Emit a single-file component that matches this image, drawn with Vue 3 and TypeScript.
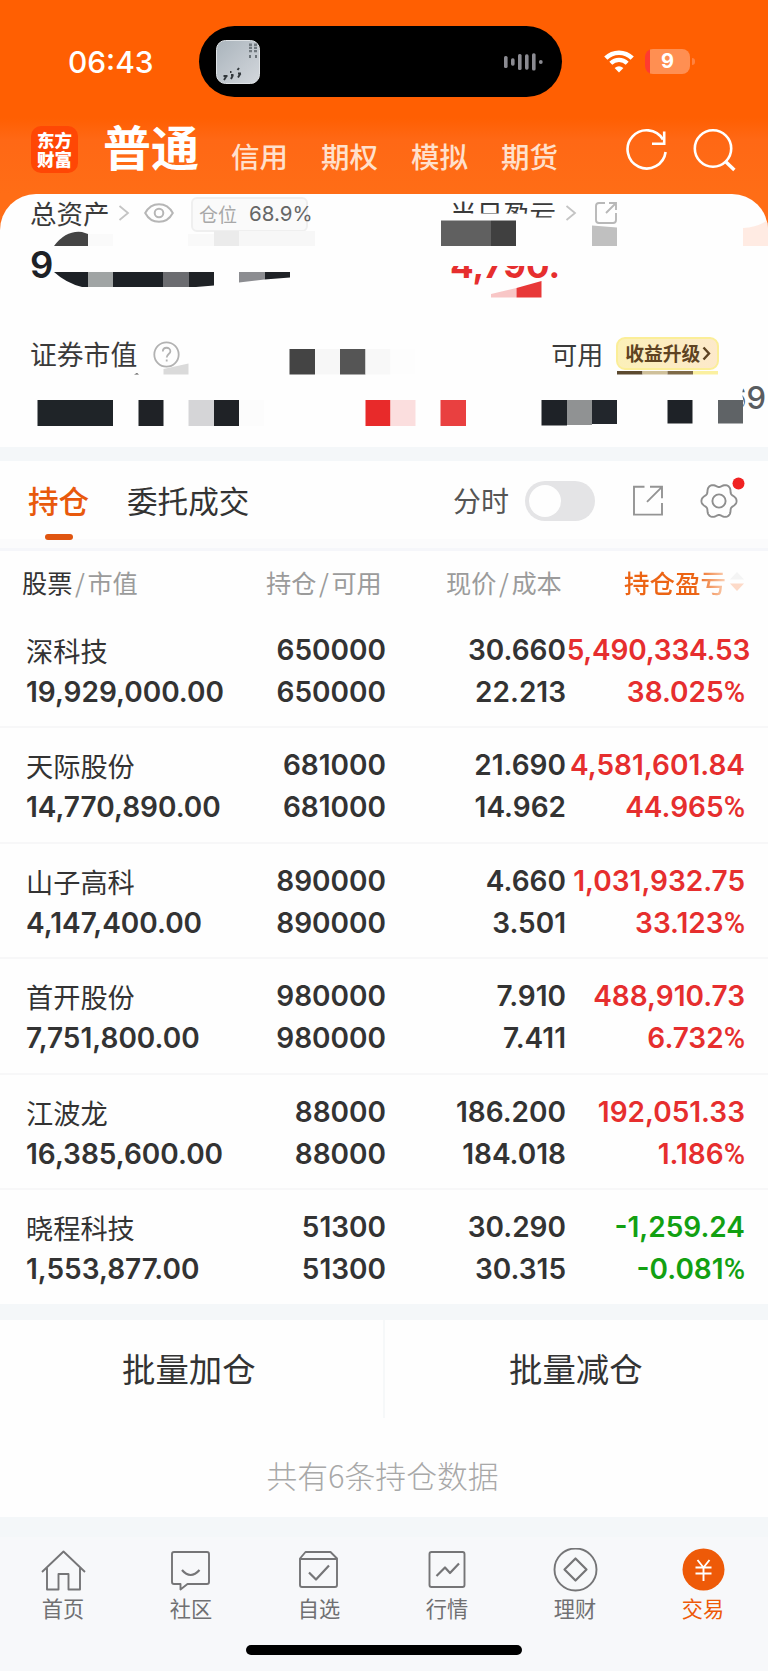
<script setup lang="ts">
interface Holding {
  name: string
  value: string
  amount: string
  price: string
  cost: string
  profit: string
  rate: string
  down?: boolean
}

interface Block {
  x: number
  y: number
  w: number
  h: number
  c: string
}

const markets: string[] = ['信用', '期权', '模拟', '期货']

const holdings: Holding[] = [
  { name: '深科技', value: '19,929,000.00', amount: '650000', price: '30.660', cost: '22.213', profit: '5,490,334.53', rate: '38.025' },
  { name: '天际股份', value: '14,770,890.00', amount: '681000', price: '21.690', cost: '14.962', profit: '4,581,601.84', rate: '44.965' },
  { name: '山子高科', value: '4,147,400.00', amount: '890000', price: '4.660', cost: '3.501', profit: '1,031,932.75', rate: '33.123' },
  { name: '首开股份', value: '7,751,800.00', amount: '980000', price: '7.910', cost: '7.411', profit: '488,910.73', rate: '6.732' },
  { name: '江波龙', value: '16,385,600.00', amount: '88000', price: '186.200', cost: '184.018', profit: '192,051.33', rate: '1.186' },
  { name: '晓程科技', value: '1,553,877.00', amount: '51300', price: '30.290', cost: '30.315', profit: '-1,259.24', rate: '-0.081', down: true },
]

const navItems: string[] = ['首页', '社区', '自选', '行情', '理财', '交易']

// Privacy mosaic over the account summary; the origin is the card's top-left corner.
const mosaic: Block[] = [
  { x: 88, y: 40, w: 25, h: 12, c: '#fafafa' },
  { x: 188, y: 40, w: 26, h: 12, c: '#f9f9f9' },
  { x: 214, y: 37, w: 25, h: 15, c: '#ebebeb' },
  { x: 239, y: 37, w: 76, h: 15, c: '#f7f7f7' },
  { x: 441, y: 26.5, w: 50, h: 25.5, c: '#606060' },
  { x: 491, y: 26.5, w: 25, h: 25.5, c: '#404040' },
  { x: 88, y: 78, w: 25, h: 15, c: '#a0a4a4' },
  { x: 113, y: 78, w: 50, h: 15, c: '#1d2126' },
  { x: 163, y: 78, w: 26, h: 15, c: '#6b6c70' },
  { x: 289.5, y: 155, w: 25.5, h: 25.5, c: '#444' },
  { x: 315, y: 155, w: 25, h: 25.5, c: '#f7f7f7' },
  { x: 340, y: 155, w: 25.5, h: 25.5, c: '#555' },
  { x: 365.5, y: 155, w: 25, h: 25.5, c: '#f8f8f8' },
  { x: 390.5, y: 155, w: 25, h: 25.5, c: '#fdfdfd' },
  { x: 617, y: 177, w: 25.5, h: 3.5, c: '#5c4a30' },
  { x: 642.5, y: 177, w: 25, h: 3.5, c: '#cfc09a' },
  { x: 667.5, y: 177, w: 25.5, h: 3.5, c: '#7f6a48' },
  { x: 693, y: 177, w: 25, h: 3.5, c: '#fbf0a0' },
  { x: 37.5, y: 206, w: 75.5, h: 26, c: '#1f2428' },
  { x: 138.5, y: 206, w: 25, h: 26, c: '#1f2226' },
  { x: 188.5, y: 206, w: 25.5, h: 26, c: '#d5d5d7' },
  { x: 214, y: 206, w: 25, h: 26, c: '#1f2226' },
  { x: 239, y: 206, w: 25, h: 26, c: '#fcfcfc' },
  { x: 365.5, y: 206, w: 25, h: 26, c: '#e82a2a' },
  { x: 390.5, y: 206, w: 25, h: 26, c: '#fbdede' },
  { x: 440.5, y: 206, w: 25.5, h: 26, c: '#e94040' },
  { x: 541.5, y: 206, w: 25.5, h: 25.5, c: '#1e2227' },
  { x: 567, y: 206, w: 25, h: 25, c: '#909293' },
  { x: 592, y: 206, w: 25, h: 24, c: '#22262c' },
  { x: 667.5, y: 206, w: 25, h: 23.5, c: '#1e2227' },
  { x: 718, y: 206, w: 25, h: 23.5, c: '#5f6366' },
]

function gearPath(): string {
  const pts: string[] = []
  for (let i = 0; i < 120; i++) {
    const t = (i / 120) * Math.PI * 2
    const r = 15.9 + 1.8 * Math.cos(6 * t) - 0.15 * Math.cos(12 * t)
    pts.push(`${(20 + r * Math.cos(t)).toFixed(2)} ${(20 + r * Math.sin(t)).toFixed(2)}`)
  }
  return `M${pts.join('L')}Z`
}
const gear = gearPath()
</script>

<template>
  <div class="phone">
    <header class="top">
      <div class="status">
        <span class="clock">06:43</span>
        <div class="island">
          <svg class="thumb" width="44" height="44" viewBox="0 0 44 44">
            <defs>
              <linearGradient id="th" x1="0" y1="0" x2="1" y2="1">
                <stop offset="0" stop-color="#aab4bc" />
                <stop offset="1" stop-color="#d3d7dc" />
              </linearGradient>
            </defs>
            <rect x=".5" y=".5" width="43" height="43" rx="9" fill="url(#th)" stroke="#dfe3e6" />
            <path d="M34.500 3.500v9M39.500 3.500v9" fill="none" stroke="#70787e" stroke-width="3" stroke-dasharray="2.400 .8" />
            <path d="M34 15v3M40 15v3" stroke="#4e555b" stroke-width="1.500" />
            <path d="M8 40l2.500-4M15 39l2-4M22 37.500l2.500-4M7.500 36h4M15 35h2.500M22 33.500h3M14 32h1.500M21.500 30l1.500-2" stroke="#32383c" stroke-width="1.900" />
          </svg>
          <svg class="wave" width="40" height="20" viewBox="0 0 40 20" fill="#8b8b92">
            <rect x="0" y="4" width="3.6" height="12" rx="1.6" />
            <rect x="7" y="6.3" width="3.6" height="7.4" rx="1.6" />
            <rect x="14" y="2" width="3.6" height="16" rx="1.6" />
            <rect x="21" y="2.3" width="3.6" height="15.4" rx="1.6" />
            <rect x="28" y="1.2" width="3.6" height="17.4" rx="1.6" />
            <circle cx="36.8" cy="10" r="1.9" />
          </svg>
        </div>
        <svg class="wifi" width="30" height="23" viewBox="0 0 30 23">
          <path d="M1.8 8.2a18.8 18.8 0 0 1 26.4 0" fill="none" stroke="#fff" stroke-width="4.6" />
          <path d="M6.8 13.2a11.7 11.7 0 0 1 16.4 0" fill="none" stroke="#fff" stroke-width="4.2" />
          <path d="M10.6 18q4.4-3.6 8.8 0L15 22.6z" fill="#fff" />
        </svg>
        <div class="battery"><span>9</span></div>
        <i class="tip"></i>
      </div>
      <div class="menu">
        <div class="logo"><span>东方</span><span>财富</span></div>
        <h1>普通</h1>
        <nav>
          <span v-for="m in markets" :key="m">{{ m }}</span>
        </nav>
        <svg class="tools" width="112" height="46" viewBox="0 0 112 46" fill="none" stroke="#fff" stroke-width="2.6">
          <path d="M38 11.5A19.1 19.1 0 1 0 40.6 24" />
          <path d="M39.2 3.5v12.2H27" />
          <circle cx="88" cy="20.5" r="18.2" />
          <path d="M101 34l8.400 8" stroke-width="3.4" />
        </svg>
      </div>
    </header>

    <section class="summary">
      <div class="row labels">
        <span class="label total">总资产</span>
        <svg class="chev" width="12" height="18" viewBox="0 0 12 18"><path d="M1.5 2l8.5 7-8.5 7" fill="none" stroke="#c4c4c4" stroke-width="1.8" /></svg>
        <svg class="eye" width="30" height="20" viewBox="0 0 30 20" fill="none" stroke="#b6b6b6" stroke-width="2">
          <path d="M1.2 10C7.5-1.8 22.5-1.8 28.8 10 22.5 21.8 7.5 21.8 1.2 10z" />
          <circle cx="15" cy="10" r="4.3" />
        </svg>
        <div class="pill"><span>仓位</span><b>68.9%</b></div>
        <span class="label today">当日盈亏</span>
        <svg class="chev" width="12" height="18" viewBox="0 0 12 18"><path d="M1.5 2l8.5 7-8.5 7" fill="none" stroke="#c4c4c4" stroke-width="1.8" /></svg>
        <svg class="share" width="24" height="24" viewBox="0 0 24 24" fill="none" stroke="#b8b8b8" stroke-width="1.9">
          <path d="M11 2H5Q2 2 2 5v14q0 3 3 3h14q3 0 3-3v-7M15 2h7v7M22 2L12 12" />
        </svg>
      </div>
      <div class="row totals">
        <span class="big">9</span>
        <span class="gain">4,790.</span>
      </div>
      <div class="row funds">
        <span class="label">证券市值</span>
        <svg class="help" width="27" height="27" viewBox="0 0 27 27" fill="none" stroke="#b2b2b2" stroke-width="1.8">
          <circle cx="13.5" cy="13.5" r="12.2" />
          <path d="M9.8 10.6c0-5.2 7.6-4.9 7.6-.4 0 2.7-3.7 3-3.7 6.4M13.7 18.4v2.2" />
        </svg>
        <span class="label usable">可用</span>
        <div class="upgrade">
          <span>收益升级</span>
          <svg width="9" height="15" viewBox="0 0 9 15"><path d="M1.5 1.5L7 7.5l-5.5 6" fill="none" stroke="#5e4322" stroke-width="2.4" /></svg>
        </div>
      </div>
      <div class="row tail"><span>69</span></div>
      <svg class="mosaic" width="768" height="253" viewBox="0 0 768 253">
        <path d="M445 19.500h80l8 4h28v14.500H445zM445 52h130v20H445z" fill="#fefefe" />
        <path d="M720 184h22l2 6-2 10 2 9-2 6h-22z" fill="#fefefe" />
        <rect v-for="(b, i) in mosaic" :key="i" :x="b.x" :y="b.y" :width="b.w" :height="b.h" :fill="b.c" />
        <path d="M54 52Q66 36 82 38l6 2v12z" fill="#444" />
        <path d="M54 78h34v15h-6Q66 89 54 78z" fill="#1d2126" />
        <path d="M189 78h25v13.5l-18 1.5h-7zM264.5 78H290v5.5l-25.500 2z" fill="#1f2226" />
        <path d="M239 78h25.500v7.500L239 88.500z" fill="#8c8d91" />
        <path d="M592 31.500l25 2V52h-25z" fill="#c0c0c0" />
        <path d="M743 34q15-1 25-8v26h-25z" fill="#ffebe3" />
        <path d="M491 100l25.500-6v9.500H491z" fill="#f8c6c6" />
        <path d="M516.500 94l25-7v16.500h-25z" fill="#e83838" />
        <path d="M163.500 175l25-5.500v11h-25z" fill="#dadada" />
        <path d="M134 180.500l3-1.500 2 1.500z" fill="#555" />
      </svg>
    </section>

    <section class="tabs">
      <div class="tab on">持仓</div>
      <div class="tab">委托成交</div>
      <span class="minute">分时</span>
      <div class="switch"><i></i></div>
      <svg class="out" width="32" height="32" viewBox="0 0 32 32" fill="none" stroke="#949494" stroke-width="1.9">
        <path d="M12.500 1.800H2v27.800h28V18M18 1.800h12v11.500M30 1.800L15 16.800" />
      </svg>
      <svg class="gear" width="46" height="46" viewBox="0 0 46 46">
        <g transform="translate(0 5)" fill="none" stroke="#8e8e8e" stroke-width="1.900">
          <path :d="gear" />
          <circle cx="20" cy="20" r="6.600" />
        </g>
        <circle cx="39.500" cy="7.500" r="6" fill="#f02222" />
      </svg>
    </section>
    <div class="rule"></div>

    <section class="table">
      <div class="thead">
        <span class="c1"><em>股票</em><i>/</i>市值</span>
        <span class="c2">持仓<i>/</i>可用</span>
        <span class="c3">现价<i>/</i>成本</span>
        <span class="c4"><b>持仓盈亏</b>
          <svg width="14" height="22" viewBox="0 0 14 22"><path d="M0 8.500L7 1l7 7.500z" fill="#f4f4f4" /><path d="M0 12.500L7 20l7-7.500z" fill="#fddac8" /></svg>
        </span>
      </div>
      <div v-for="h in holdings" :key="h.name" class="item">
        <div class="c1"><span class="name">{{ h.name }}</span><span>{{ h.value }}</span></div>
        <div class="c2"><span>{{ h.amount }}</span><span>{{ h.amount }}</span></div>
        <div class="c3"><span>{{ h.price }}</span><span>{{ h.cost }}</span></div>
        <div class="c4" :class="{ down: h.down }">
          <span class="profit">{{ h.profit }}</span>
          <span>{{ h.rate }}<small>%</small></span>
        </div>
      </div>
    </section>

    <section class="batch">
      <div>批量加仓</div>
      <div>批量减仓</div>
    </section>
    <p class="count">共有6条持仓数据</p>

    <footer>
      <div class="nav">
        <div v-for="(n, i) in navItems" :key="n" class="nav-item" :class="{ active: i === 5 }">
          <svg width="46" height="46" viewBox="0 0 46 46" fill="none" stroke="#757577" stroke-width="1.900" stroke-linejoin="round">
            <path v-if="i === 0" d="M2 24L23.500 3.500 45 24M7 20v21.500h11.500V26h10v15.500H40V20" />
            <template v-else-if="i === 1">
              <path d="M6 4h33q2 0 2 2v28q0 2-2 2H19.500l-7 5.500V36H6q-2 0-2-2V6q0-2 2-2z" />
              <path d="M14 22q8.500 10 17.500 0" stroke-width="2.200" />
            </template>
            <template v-else-if="i === 2">
              <path d="M9.500 4h25L41 10.500V37q0 2-2 2H6q-2 0-2-2V10.500zM4.500 11h36" />
              <path d="M13 24.500l7 7L33 17.500" stroke-width="2.200" />
            </template>
            <template v-else-if="i === 3">
              <rect x="5.500" y="4" width="35" height="35" rx="2" />
              <path d="M12.500 28l8.500-8.500 5 5.500L35 15.500" stroke-width="2.200" />
            </template>
            <template v-else-if="i === 4">
              <circle cx="23.500" cy="21.500" r="21" />
              <path d="M23.500 10.500l11 11-11 11-11-11z" stroke-width="2.200" />
            </template>
            <template v-else>
              <circle cx="23.500" cy="21.500" r="21" fill="#ee5a08" stroke="none" />
              <path d="M17.500 12l6 7.500L29.500 12M15.500 19.500h16M15.500 25.500h16M23.500 19.500V33" stroke="#fff" stroke-width="1.900" />
            </template>
          </svg>
          <span>{{ n }}</span>
        </div>
      </div>
      <div class="home-bar"></div>
    </footer>
  </div>
</template>

<style>
body {
  margin: 0;
  background: #fefefe;
}
</style>

<style scoped>
.phone {
  width: 768px;
  height: 1671px;
  overflow: hidden;
  display: flex;
  flex-direction: column;
  background: #fefefe;
  color: #333;
  font-family: "Noto Sans CJK SC", sans-serif;
}
svg {
  display: block;
  flex: none;
}
i, em {
  font-style: normal;
}
.top {
  height: 230px;
  flex: none;
  margin-bottom: -36px;
  background: linear-gradient(#ff5f02 0, #ff5f02 118px, #ff6815 140px, #ff6d16 194px);
}
.status {
  height: 123px;
  display: flex;
  align-items: center;
}
.clock {
  width: 131px;
  margin: 1px 0 0 68px;
  font: 500 29.900px/30px Inter, sans-serif;
  color: #fff;
}
.island {
  width: 363px;
  height: 71px;
  box-sizing: border-box;
  padding: 0 18px 0 17px;
  border-radius: 36px;
  background: #000;
  display: flex;
  align-items: center;
  justify-content: space-between;
}
.wifi {
  margin-left: 42px;
}
.battery {
  margin-left: 11px;
  width: 45px;
  height: 25px;
  border-radius: 8px;
  background: linear-gradient(90deg, #ff3b30 0 5px, #ff8f52 5px);
  text-align: center;
  color: #fff;
  font: 700 20px/25px Inter, sans-serif;
}
.tip {
  width: 3px;
  height: 7px;
  margin-left: 2px;
  border-radius: 0 3px 3px 0;
  background: #ff8240;
}
.menu {
  height: 70px;
  padding-top: 1px;
  display: flex;
  align-items: flex-start;
}
.logo {
  width: 47px;
  height: 47px;
  margin: 2px 0 0 31px;
  border-radius: 10px;
  background: #ff4705;
  color: #fff;
  display: flex;
  flex-direction: column;
  align-items: center;
  justify-content: center;
  font-size: 17.500px;
  font-weight: 900;
  line-height: 20px;
}
.logo span {
  margin-top: -1px;
}
h1 {
  margin: -7px 0 0 25px;
  width: 128px;
  font-size: 48px;
  line-height: 56px;
  font-weight: 700;
  color: #fff;
}
nav {
  display: flex;
  width: 383px;
  color: #ffe0cc;
  font-size: 28.500px;
  font-weight: 500;
  line-height: 32px;
  margin-top: 16px;
}
nav span {
  width: 90px;
  flex: none;
}
.tools {
  margin-left: 11px;
  margin-top: 4px;
}
.summary {
  position: relative;
  height: 253px;
  flex: none;
  background: #fefefe;
  border-radius: 36px 36px 0 0;
  overflow: hidden;
}
.row {
  display: flex;
  align-items: center;
}
.labels {
  height: 38px;
}
.label {
  font-size: 26.800px;
  line-height: 36px;
  margin-left: 30px;
  color: #3a3a3a;
  white-space: nowrap;
}
.labels .total {
  width: 79px;
  font-size: 26.500px;
}
.chev {
  margin-left: 9px;
}
.eye {
  margin-left: 14px;
}
.pill {
  margin: 2px 0 0 17px;
  width: 117px;
  height: 35px;
  box-sizing: border-box;
  border: 2px solid #efefef;
  border-radius: 6px;
  background: #fafafa;
  display: flex;
  align-items: center;
  white-space: nowrap;
}
.pill span {
  margin-left: 6px;
  width: 50px;
  flex: none;
  font-size: 19px;
  line-height: 28px;
  color: #a8a8a8;
}
.pill b {
  font: 400 20.500px/28px Inter, sans-serif;
  color: #666;
}
.labels .today {
  margin-left: 142px;
  width: 106px;
  font-size: 26.500px;
}
.share {
  margin-left: 17px;
}
.totals {
  height: 66px;
  font-family: Inter, sans-serif;
}
.big {
  margin-left: 30px;
  width: 420px;
  font-size: 36.500px;
  font-weight: 600;
  color: #1d2126;
}
.gain {
  font-size: 35px;
  font-weight: 700;
  color: #e62e2e;
}
.funds {
  height: 112px;
}
.help {
  margin-left: 16px;
}
.funds .usable {
  margin-left: 371px;
  width: 54px;
  font-size: 26px;
}
.upgrade {
  margin: 0 0 2px 11px;
  width: 103px;
  height: 33px;
  box-sizing: border-box;
  padding-left: 7px;
  border: 2px solid #fbee98;
  border-radius: 9px;
  background: linear-gradient(100deg, #fbf0b8, #fde9cb);
  display: flex;
  align-items: center;
  gap: 2px;
  color: #5e4322;
  font-size: 18.800px;
  font-weight: 700;
  line-height: 24px;
  white-space: nowrap;
}
.tail {
  height: 26px;
  margin-top: -25px;
  justify-content: flex-end;
  padding-right: 2px;
  font: 500 31px/26px Inter, sans-serif;
  color: #595c60;
}
.mosaic {
  position: absolute;
  left: 0;
  top: 0;
}
.tabs {
  height: 78px;
  flex: none;
  border-top: 14px solid #f4f7f9;
  display: flex;
  align-items: flex-start;
}
.tab {
  position: relative;
  margin: 21px 0 0 38px;
  width: 123px;
  font-size: 30.600px;
  line-height: 36px;
  white-space: nowrap;
}
.tab.on {
  margin-left: 28px;
  width: 61px;
  color: #e8590c;
  font-weight: 500;
}
.tab.on::after {
  content: "";
  position: absolute;
  z-index: 1;
  left: 17px;
  top: 52px;
  width: 28px;
  height: 6px;
  border-radius: 3px;
  background: #e05510;
}
.minute {
  margin: 21px 0 0 203px;
  width: 56px;
  font-size: 28px;
  line-height: 36px;
  color: #555;
}
.switch {
  margin: 20px 0 0 16px;
  width: 70px;
  height: 40px;
  border-radius: 20px;
  background: #e4e4e6;
}
.switch i {
  display: block;
  width: 32px;
  height: 32px;
  margin: 4px;
  border-radius: 50%;
  background: #fefefe;
}
.out {
  margin: 24px 0 0 37px;
}
.gear {
  margin: 15px 0 0 35px;
}
.rule {
  height: 9px;
  flex: none;
  background: #fbfbfc;
  border-bottom: 3px solid #f5f6fa;
}
.table {
  flex: none;
}
.thead {
  display: flex;
  height: 62px;
  align-items: center;
  font-size: 25.200px;
  line-height: 34px;
  color: #9b9b9b;
  white-space: nowrap;
}
.thead em {
  color: #333;
}
.thead i {
  display: inline-block;
  width: 15px;
  text-align: center;
}
.thead .c1 {
  margin-left: 22px;
  width: 244px;
}
.thead .c2 {
  width: 180px;
}
.thead .c3 {
  width: 178px;
}
.thead .c4 {
  display: flex;
  align-items: center;
  gap: 4px;
}
.thead b {
  font-weight: 500;
  font-size: 25.500px;
  background: linear-gradient(90deg, #ec6414 0 72px, #fde0cc 106px);
  -webkit-background-clip: text;
  background-clip: text;
  color: transparent;
}
.item {
  height: 115.400px;
  box-sizing: border-box;
  padding-top: 16px;
  border-bottom: 2px solid #f7f7f8;
  display: flex;
  font: 600 28px/42px Inter, sans-serif;
  white-space: nowrap;
}
.item:last-child {
  height: 114.500px;
  border-bottom: 0;
}
.item span {
  display: block;
}
.item .c1 {
  width: 226px;
  margin-left: 26px;
}
.item .name {
  font: 400 27.200px/42px "Noto Sans CJK SC", sans-serif;
}
.item .c2 {
  width: 134px;
  text-align: right;
}
.item .c3 {
  width: 180px;
  text-align: right;
}
.item .c4 {
  width: 179px;
  display: flex;
  flex-direction: column;
  align-items: flex-end;
  color: #e62e2e;
}
.item .c4.down {
  color: #12a012;
}
.item small {
  font: 500 29px/30px Roboto, sans-serif;
}
.item:nth-child(2) .profit {
  margin-right: -5px;
  letter-spacing: -0.200px;
}
.batch {
  display: flex;
  flex: none;
  height: 98px;
  border-top: 16px solid #f4f7f9;
}
.batch div {
  width: 383px;
  box-sizing: border-box;
  padding-left: 122px;
  font-size: 33.400px;
  line-height: 96px;
}
.batch div + div {
  width: 385px;
  padding-left: 124px;
  border-left: 2px solid #f6f8f9;
}
.count {
  margin: 0;
  height: 99px;
  flex: none;
  text-align: center;
  font-size: 30.800px;
  font-weight: 300;
  line-height: 114px;
  color: #a8a8a8;
  padding-right: 3px;
}
footer {
  flex: 1;
  border-top: 20px solid #f4f7f9;
  background: #f7f8fa;
}
.nav {
  display: flex;
  margin-left: -1px;
}
.nav-item {
  width: 128px;
  padding-top: 11px;
  display: flex;
  flex-direction: column;
  align-items: center;
}
.nav-item span {
  margin-top: -1px;
  font-size: 21.200px;
  line-height: 30px;
  color: #707072;
}
.nav-item.active span {
  color: #ee5a08;
}
.home-bar {
  width: 276px;
  height: 10px;
  border-radius: 5px;
  background: #000;
  margin: 22px auto 0;
}
</style>
